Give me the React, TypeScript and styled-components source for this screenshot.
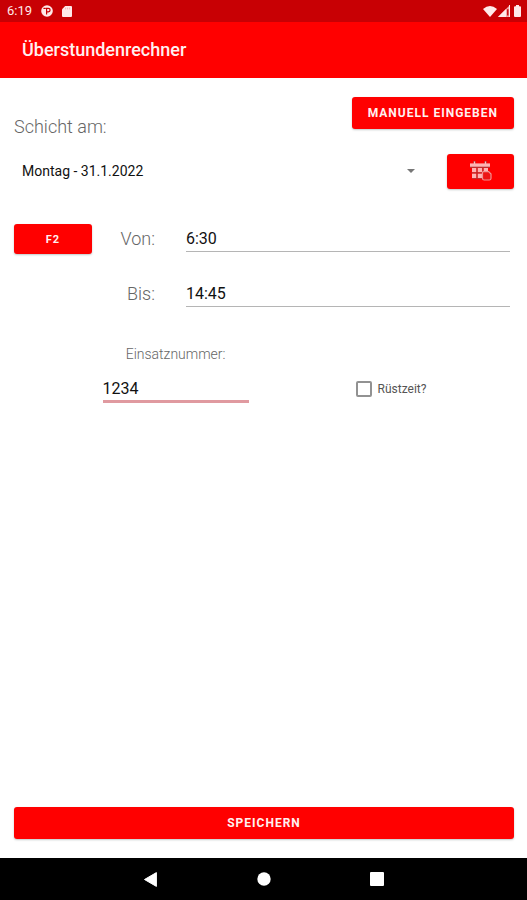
import React, { useState } from "react";
import styled, { createGlobalStyle } from "styled-components";

const RED = "#ff0000";
const DARK_RED = "#c80004";

const GlobalStyle = createGlobalStyle`
  *, *::before, *::after { box-sizing: border-box; }
  body { margin: 0; background: #fff; }
  button, input, select { font-family: inherit; }
`;

const Screen = styled.div`
  display: flex;
  flex-direction: column;
  min-height: 100vh;
  background: #fff;
  color: #111;
  font-family: Roboto, "Noto Sans", sans-serif;
`;

const StatusBar = styled.div`
  display: flex;
  align-items: center;
  justify-content: space-between;
  height: 22px;
  padding: 0 6px 0 7px;
  background: ${DARK_RED};
  color: #ffe9e9;
  font-size: 13px;
  line-height: 22px;
`;

const StatusGroup = styled.div<{ $gap: number }>`
  display: flex;
  align-items: center;
  gap: ${({ $gap }) => $gap}px;

  svg { display: block; }
`;

const AppBar = styled.header`
  display: flex;
  align-items: center;
  height: 56px;
  padding: 0 22px;
  background: ${RED};
`;

const Title = styled.h1`
  margin: 0;
  color: #fff0f0;
  font-size: 18px;
  font-weight: 500;
  line-height: 24px;
`;

const Form = styled.form`
  display: flex;
  flex: 1;
  flex-direction: column;
  padding: 19px 13px 19px 14px;
`;

const Button = styled.button<{ $size?: "small" | "medium"; $width?: number }>`
  display: flex;
  align-items: center;
  justify-content: center;
  width: ${({ $width }) => ($width ? `${$width}px` : "auto")};
  height: ${({ $size }) => ($size === "small" ? 30 : 32)}px;
  padding: 0 16px;
  border: 0;
  border-radius: 3px;
  background: ${RED};
  box-shadow: 0 1px 2px rgba(0, 40, 40, 0.25);
  color: #fff0f0;
  font-size: ${({ $size }) => ($size === "small" ? 11 : 12)}px;
  font-weight: 700;
  letter-spacing: 1px;
  text-transform: uppercase;
  cursor: pointer;
`;

const IconButton = styled(Button)`
  height: 35px;
  padding: 0;
`;

const HeadRow = styled.div`
  display: flex;
  justify-content: space-between;
  align-items: flex-start;
`;

const Label = styled.label<{ $small?: boolean }>`
  color: #666;
  font-size: ${({ $small }) => ($small ? 14 : 18)}px;
  font-weight: 300;
  line-height: 22px;
`;

const ShiftLabel = styled(Label)`
  padding-top: 19px;
`;

const DateRow = styled.div`
  display: flex;
  align-items: center;
  gap: 22px;
  margin-top: 15px;
`;

const SelectField = styled.div`
  display: grid;
  flex: 1;
  grid-template-columns: 1fr 18px;
  align-items: center;

  svg { grid-area: 1 / 2; pointer-events: none; }
`;

const Select = styled.select`
  grid-area: 1 / 1 / 2 / 3;
  width: 100%;
  height: 36px;
  padding: 0 24px 0 8px;
  border: 0;
  appearance: none;
  background: transparent;
  color: #111;
  font-size: 14px;
`;

const TimeGrid = styled.div`
  display: grid;
  grid-template-columns: 78px 63px 1fr;
  row-gap: 25px;
  align-items: center;
  margin-top: 35px;
  padding-right: 4px;
`;

const TimeLabel = styled(Label)`
  grid-column: 2;
  text-align: right;
`;

const TextInput = styled.input<{ $active?: boolean }>`
  display: block;
  width: 100%;
  height: 26px;
  padding: 0;
  border: 0;
  border-bottom: ${({ $active }) => ($active ? "3px solid #e09aa0" : "1px solid #b5b5b5")};
  border-radius: 0;
  outline: 0;
  background: transparent;
  color: #111;
  font-size: 16px;
`;

const TimeInputCell = styled.div`
  display: flex;
  align-items: center;
  height: 30px;
  padding-left: 31px;
`;

const DetailRow = styled.div`
  display: grid;
  grid-template-columns: 13fr 10fr;
  align-items: end;
  margin-top: 34px;
`;

const NumberField = styled.div`
  display: flex;
  flex-direction: column;
  align-items: center;
  justify-self: end;
  width: 146px;
  margin-right: 48px;
`;

const NumberInputCell = styled.div`
  width: 100%;
  margin-top: 12px;
`;

const CheckLabel = styled.label`
  display: flex;
  align-items: center;
  gap: 6px;
  height: 28px;
  margin-left: 59px;
  color: #555;
  font-size: 12px;
  line-height: 16px;
`;

const CheckBox = styled.input`
  width: 16px;
  height: 16px;
  margin: 0;
  border: 2px solid #929292;
  border-radius: 2px;
  appearance: none;

  &:checked { background: ${RED}; border-color: ${RED}; }
`;

const SaveArea = styled.div`
  display: grid;
  margin-top: auto;
`;

const NavBar = styled.nav`
  display: flex;
  justify-content: center;
  gap: 73px;
  height: 42px;
  background: #000;
`;

const NavButton = styled.button`
  display: flex;
  align-items: center;
  justify-content: center;
  width: 40px;
  padding: 0;
  border: 0;
  background: transparent;
  cursor: pointer;
`;

const AppBadgeIcon = () => (
  <svg width="12" height="12" viewBox="0 0 12 12" aria-hidden="true">
    <circle cx="6" cy="6" r="5.8" fill="#ffe9e9" />
    <path d="M5.6 9.6V3.4h1.8a1.7 1.7 0 0 1 0 3.4H5.6" fill="none" stroke={DARK_RED} strokeWidth="1.2" />
    <path d="M2.4 3.4h2.4" stroke={DARK_RED} strokeWidth="1.2" />
  </svg>
);

const SdCardIcon = () => (
  <svg width="10" height="11" viewBox="0 0 10 11" aria-hidden="true">
    <path d="M3.2 0H9a1 1 0 0 1 1 1v9a1 1 0 0 1-1 1H1a1 1 0 0 1-1-1V3.2Z" fill="#ffe9e9" />
    <path d="M3.6 1.6v1.8M5.6 1.6v1.8M7.6 1.6v1.8" stroke="#f2b4b5" strokeWidth="0.9" />
  </svg>
);

const WifiIcon = () => (
  <svg width="14" height="11" viewBox="0 0 14 11" aria-hidden="true">
    <path d="M0 3Q7-2.8 14 3L7 11Z" fill="#ffe9e9" />
  </svg>
);

const SignalIcon = () => (
  <svg width="12" height="12" viewBox="0 0 12 12" aria-hidden="true">
    <path d="M12 0v12H0Z" fill="#f3a9aa" />
    <path d="M8 4v8H0Z" fill="#ffe9e9" />
    <path d="M9.8 4.2v6.4" stroke={DARK_RED} strokeWidth="1.4" />
    <path d="M11.5 0v12" stroke="#ffe9e9" />
  </svg>
);

const BatteryIcon = () => (
  <svg width="7" height="12" viewBox="0 0 7 12" aria-hidden="true">
    <path d="M2 0h3v1.3h1q1 0 1 1V11q0 1-1 1H1q-1 0-1-1V2.3q0-1 1-1h1Z" fill="#ffe9e9" />
  </svg>
);

const CalendarIcon = () => (
  <svg width="22" height="20" viewBox="0 0 22 20" aria-hidden="true">
    <path d="M4.5 0v4M15.5 0v4" stroke="#a83a3a" strokeWidth="2.4" />
    <path d="M4.5 .5v3M15.5 .5v3" stroke="#ffc0c0" strokeWidth="1.2" />
    <path d="M0 2.4h20v3.6H0Z" fill="#ffb3b3" />
    <path d="M0 6.2h20" stroke="#a94242" strokeWidth="1" />
    <path d="M2 7h4.4v4.2H2ZM7.6 7h4.6v4.2H7.6ZM13.6 7h4.4v4.2h-4.4ZM2 12.6h4.4v4.6H2ZM7.6 12.6h4.6v4.6H7.6Z" fill="#ffb3b3" />
    <path d="M1 11.9h11M2 17.6h10M7 7v10M12.9 7v4" stroke="#b03030" strokeWidth="0.9" />
    <path d="M13.4 10.6h5.2l2.4 2.4v4.2q0 1.8-1.8 1.8h-5q-1.7 0-1.7-1.8v-5.1q0-1.5.9-1.5Z" fill="#ed1515" stroke="#f09292" strokeWidth="1.2" />
  </svg>
);

const ArrowIcon = () => (
  <svg width="8" height="4" viewBox="0 0 8 4" aria-hidden="true">
    <path d="M0 0h8L4 4Z" fill="#777" />
  </svg>
);

const BackIcon = () => (
  <svg width="13" height="15" viewBox="0 0 13 15" aria-hidden="true">
    <path d="M12.4.6v13.8L.5 7.5Z" fill="#fff" stroke="#fff" strokeLinejoin="round" />
  </svg>
);

const HomeIcon = () => (
  <svg width="14" height="14" viewBox="0 0 14 14" aria-hidden="true">
    <circle cx="7" cy="7" r="6.7" fill="#fff" />
  </svg>
);

const RecentsIcon = () => (
  <svg width="14" height="14" viewBox="0 0 14 14" aria-hidden="true">
    <rect width="14" height="14" rx="1" fill="#fff" />
  </svg>
);

export default function App() {
  const [from, setFrom] = useState("6:30");
  const [until, setUntil] = useState("14:45");
  const [missionNumber, setMissionNumber] = useState("1234");
  const [setupTime, setSetupTime] = useState(false);

  return (
    <Screen>
      <GlobalStyle />
      <StatusBar>
        <StatusGroup $gap={9}>
          <span>6:19</span>
          <AppBadgeIcon />
          <SdCardIcon />
        </StatusGroup>
        <StatusGroup $gap={4}>
          <StatusGroup $gap={1}>
            <WifiIcon />
            <SignalIcon />
          </StatusGroup>
          <BatteryIcon />
        </StatusGroup>
      </StatusBar>
      <AppBar>
        <Title>Überstundenrechner</Title>
      </AppBar>
      <Form onSubmit={(event) => event.preventDefault()}>
        <HeadRow>
          <ShiftLabel htmlFor="shift">Schicht am:</ShiftLabel>
          <Button type="button">Manuell eingeben</Button>
        </HeadRow>
        <DateRow>
          <SelectField>
            <Select id="shift">
              <option>Montag - 31.1.2022</option>
            </Select>
            <ArrowIcon />
          </SelectField>
          <IconButton type="button" $width={67} aria-label="Datum wählen">
            <CalendarIcon />
          </IconButton>
        </DateRow>
        <TimeGrid>
          <Button type="button" $size="small">F2</Button>
          <TimeLabel htmlFor="from">Von:</TimeLabel>
          <TimeInputCell>
            <TextInput id="from" value={from} onChange={(e) => setFrom(e.target.value)} />
          </TimeInputCell>
          <TimeLabel htmlFor="until">Bis:</TimeLabel>
          <TimeInputCell>
            <TextInput id="until" value={until} onChange={(e) => setUntil(e.target.value)} />
          </TimeInputCell>
        </TimeGrid>
        <DetailRow>
          <NumberField>
            <Label htmlFor="mission" $small>Einsatznummer:</Label>
            <NumberInputCell>
              <TextInput
                id="mission"
                $active
                value={missionNumber}
                onChange={(e) => setMissionNumber(e.target.value)}
              />
            </NumberInputCell>
          </NumberField>
          <CheckLabel>
            <CheckBox
              type="checkbox"
              checked={setupTime}
              onChange={(e) => setSetupTime(e.target.checked)}
            />
            Rüstzeit?
          </CheckLabel>
        </DetailRow>
        <SaveArea>
          <Button type="submit">Speichern</Button>
        </SaveArea>
      </Form>
      <NavBar>
        <NavButton type="button" aria-label="Zurück"><BackIcon /></NavButton>
        <NavButton type="button" aria-label="Startseite"><HomeIcon /></NavButton>
        <NavButton type="button" aria-label="Übersicht"><RecentsIcon /></NavButton>
      </NavBar>
    </Screen>
  );
}
